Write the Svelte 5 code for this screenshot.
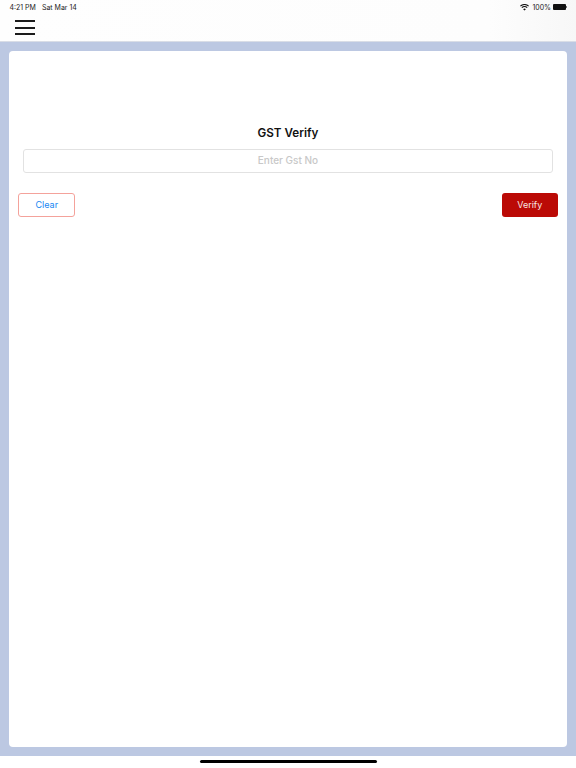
<script lang="ts">
	let gstNo = $state('');
</script>

<div class="screen">
	<header class="topbar">
		<div class="status">
			<span class="status__time">4:21 PM</span>
			<span class="status__date">Sat Mar 14</span>
			<span class="status__right">
				<svg class="wifi" viewBox="0 0 16 12" aria-hidden="true">
					<path d="M8 11.5 5.6 8.9a3.4 3.4 0 0 1 4.8 0zM3.9 7.1 2.6 5.7a7.7 7.7 0 0 1 10.8 0l-1.3 1.4a5.8 5.8 0 0 0-8.2 0zM1.3 4.4 0 3a11.4 11.4 0 0 1 16 0l-1.3 1.4a9.5 9.5 0 0 0-13.4 0z" />
				</svg>
				<span>100%</span>
				<span class="battery"><span class="battery__fill"></span></span>
			</span>
		</div>
		<button class="menu" aria-label="Menu">
			<span></span>
			<span></span>
			<span></span>
		</button>
	</header>

	<main class="main">
		<section class="card">
			<h1 class="card__title">GST Verify</h1>
			<input class="card__input" placeholder="Enter Gst No" bind:value={gstNo} />
			<div class="actions">
				<button class="btn btn--clear" onclick={() => (gstNo = '')}>Clear</button>
				<button class="btn btn--verify">Verify</button>
			</div>
		</section>
	</main>

	<footer class="home">
		<span class="home__bar"></span>
	</footer>
</div>

<style>
	:global(body) {
		margin: 0;
		background: #fff;
	}

	.screen {
		display: flex;
		flex-direction: column;
		width: 576px;
		height: 768px;
		overflow: hidden;
		font-family: Inter, 'Liberation Sans', sans-serif;
	}

	.topbar {
		height: 41px;
		flex-shrink: 0;
		background: linear-gradient(90deg, #fefefe 0%, #fdfdfd 85%, #f7f7f7 100%);
		border-bottom: 1px solid #d9dde6;
	}

	.status {
		display: flex;
		align-items: center;
		gap: 6px;
		height: 14px;
		padding: 0 9px 0 9.5px;
		font-size: 7px;
		color: #222;
	}

	.status__right {
		display: flex;
		align-items: center;
		gap: 2px;
		margin-left: auto;
	}

	.wifi {
		width: 9px;
		height: 7px;
		margin-right: 1px;
		fill: #111;
	}

	.battery {
		position: relative;
		display: block;
		width: 13px;
		height: 6px;
		margin-right: 1px;
		padding: 0;
	}

	.battery__fill {
		display: block;
		height: 100%;
		background: #111;
		border-radius: 1px;
	}

	.battery::after {
		content: '';
		position: absolute;
		top: 2px;
		right: -1px;
		width: 1px;
		height: 2px;
		background: #777;
	}

	.menu {
		display: flex;
		flex-direction: column;
		gap: 4.5px;
		width: 20px;
		padding: 0;
		margin: 6px 0 0 15px;
		border: none;
		background: none;
	}

	.menu span {
		display: block;
		height: 2px;
		background: #1c1c1c;
	}

	.main {
		flex: 1;
		display: flex;
		padding: 9px 9.3px 8.7px 9.3px;
		background: #bcc8e2;
	}

	.card {
		flex: 1;
		display: flex;
		flex-direction: column;
		align-items: center;
		padding: 72.5px 9px 0;
		background: #fff;
		border-radius: 4px;
	}

	.card__title {
		margin: 0 0 7.5px;
		font-size: 11.7px;
		line-height: 18px;
		font-weight: 600;
		color: #111;
	}

	.card__input {
		box-sizing: border-box;
		width: 530px;
		height: 24px;
		padding: 0 8px 1.5px;
		border: 1px solid #e2e2e2;
		border-radius: 3px;
		outline: none;
		font: inherit;
		font-size: 10px;
		font-weight: 500;
		text-align: center;
		color: #333;
	}

	.card__input::placeholder {
		color: #c8c8c8;
		opacity: 1;
	}

	.actions {
		display: flex;
		justify-content: space-between;
		align-self: stretch;
		margin-top: 19.5px;
	}

	.btn {
		box-sizing: border-box;
		height: 24px;
		padding: 0 0 1px;
		border-radius: 3px;
		font: inherit;
		font-size: 9px;
	}

	.btn--clear {
		width: 57px;
		background: #fff;
		border: 1.25px solid #f4a29b;
		color: #1787f2;
	}

	.btn--verify {
		width: 56px;
		background: #bb0a06;
		border: none;
		color: #f8e4e2;
	}

	.home {
		display: flex;
		justify-content: center;
		height: 12px;
		flex-shrink: 0;
		background: #fff;
	}

	.home__bar {
		display: block;
		width: 177px;
		height: 3px;
		margin-top: 4px;
		background: #000;
		border-radius: 2px;
	}
</style>
